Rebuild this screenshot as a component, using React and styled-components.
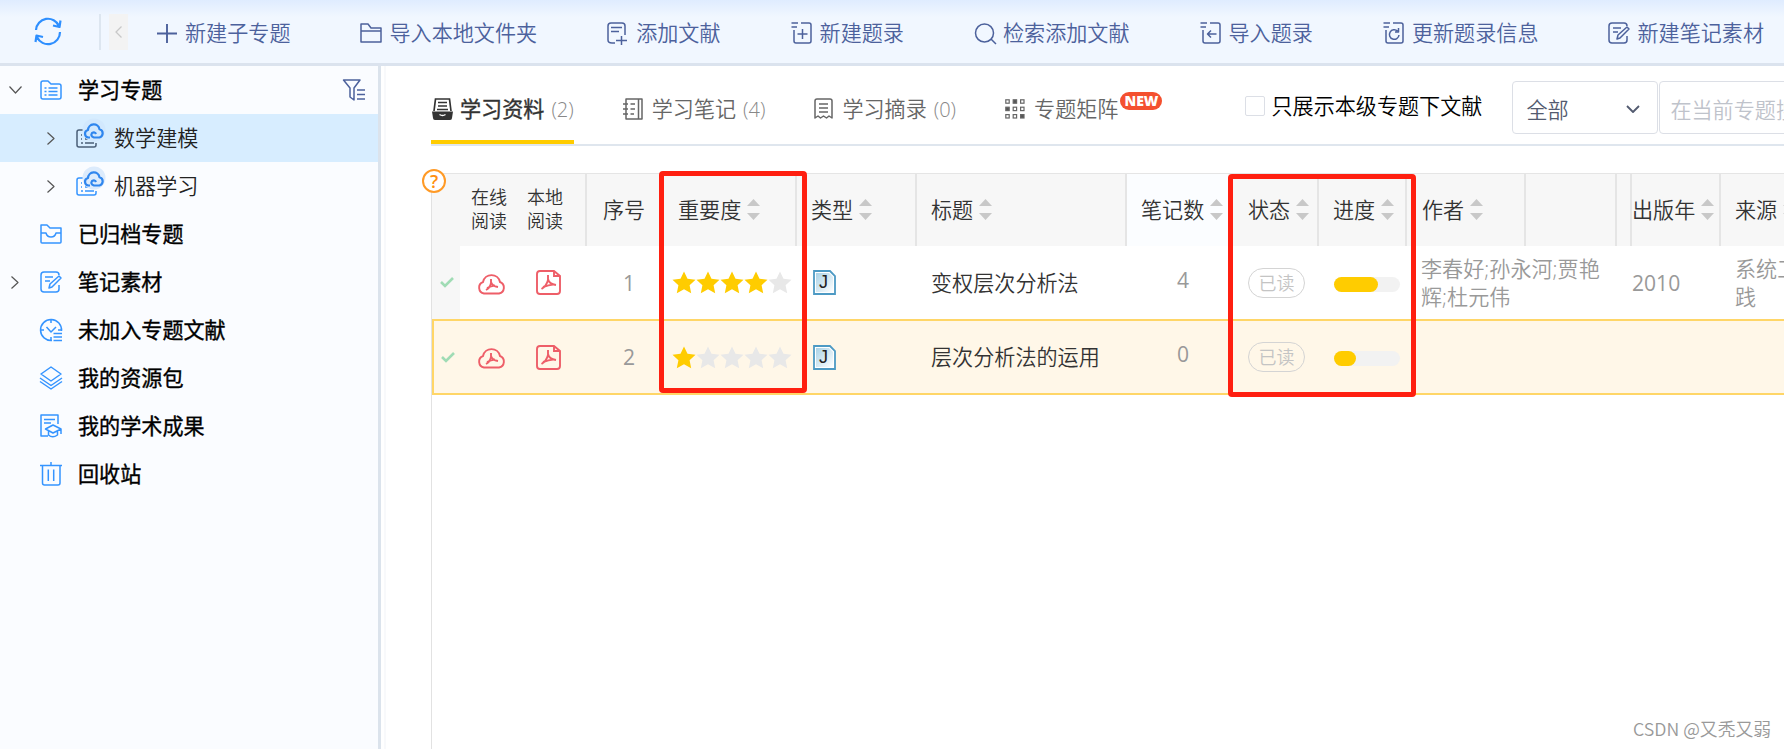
import React from "react";
import styled, { createGlobalStyle } from "styled-components";

const Global = createGlobalStyle`
  * {
    box-sizing: border-box;
  }
  body {
    margin: 0;
    background: #fff;
    font-family: "Open Sans", "Noto Sans CJK SC", sans-serif;
    font-size: 21.1px;
    font-weight: 350;
  }
  svg {
    display: block;
    flex: none;
    overflow: visible;
  }
`;

const Page = styled.div`
  position: relative;
  display: flex;
  flex-direction: column;
  width: 1784px;
  height: 749px;
  overflow: hidden;
`;

const Toolbar = styled.header`
  display: flex;
  align-items: center;
  flex: none;
  height: 66px;
  padding: 0 0 4px 34px;
  white-space: nowrap;
  color: #4c619c;
  border-bottom: 3px solid #dbe3ee;
  background: linear-gradient(#dfecff, #f1f7ff 17px);
`;

const Refresh = styled.div`
  width: 65px;
  padding-top: 3px;
  color: #2e8fff;
`;

const Collapse = styled.div`
  display: flex;
  align-items: center;
  width: 29px;
  height: 36px;
  margin-top: 5px;
  padding-left: 8px;
  border-left: 2px solid #dde6f0;
`;

const CollapseButton = styled.div`
  display: flex;
  align-items: center;
  justify-content: center;
  width: 19px;
  height: 36px;
  color: #c8c8c8;
  background: #f3f3f3;
`;

const Tools = styled.div`
  display: flex;
  gap: 70px;
  padding: 7px 0 0 29px;
`;

const Tool = styled.div`
  display: flex;
  align-items: center;
  line-height: 30px;
  gap: ${(props) => props.$gap || 7}px;
  color: #4c619c;
`;

const Main = styled.div`
  display: flex;
  flex: 1;
  min-height: 0;
`;

const Sidebar = styled.aside`
  width: 381px;
  flex: none;
  background: #fafcff;
  border-right: 3px solid #dbe3ec;
`;

const NavRow = styled.div`
  display: flex;
  align-items: center;
  height: 48px;
  padding: 0 13px 0 ${(props) => (props.$child ? 44 : 8)}px;
  color: ${(props) => (props.$child ? "#222" : "#000")};
  font-weight: ${(props) => (props.$child ? 350 : 400)};
  -webkit-text-stroke: ${(props) => (props.$child ? 0 : 0.35)}px;
  background: ${(props) => (props.$selected ? "#d7edff" : "transparent")};
`;

const Arrow = styled.div`
  display: flex;
  justify-content: center;
  width: 14px;
  margin-right: 18px;
  color: #555;
`;

const NavIcon = styled.div`
  width: 38px;
  color: ${(props) => (props.$dark ? "#4b5f78" : "#3594ff")};
`;

const NavLabel = styled.span`
  flex: 1;
  padding-bottom: 3px;
`;

const Content = styled.main`
  flex: 1;
  min-width: 0;
  margin-left: 3px;
  padding-left: 45px;
  border-left: 2px solid #f8f9fb;
`;

const TabBar = styled.div`
  display: flex;
  height: 80px;
  white-space: nowrap;
  border-bottom: 2px solid #dfe6ee;
`;

const Tab = styled.div`
  display: flex;
  align-items: center;
  height: 78px;
  margin-right: 48px;
  padding: 12px 0 ${(props) => (props.$active ? 0 : 4)}px 1px;
  color: ${(props) => (props.$active ? "#333" : "#666")};
  border-bottom: ${(props) => (props.$active ? "4px solid #fc0" : "0")};
`;

const TabLabel = styled.span`
  margin-left: ${(props) => (props.$active ? 7 : 9)}px;
  padding-bottom: 2px;
  font-weight: ${(props) => (props.$active ? 400 : 350)};
  -webkit-text-stroke: ${(props) => (props.$active ? 0.35 : 0)}px;
`;

const Count = styled.span`
  margin-left: 7px;
  color: #888;
  font-size: 20px;
`;

const NewBadge = styled.span`
  align-self: flex-start;
  width: 42px;
  height: 18px;
  margin: 14px 0 0 2px;
  border-radius: 9px;
  background: #f4502f;
  color: #fff;
  font: 800 14px/18px "Open Sans", sans-serif;
  text-align: center;
`;

const Filters = styled.div`
  display: flex;
  align-items: center;
  margin-left: 35px;
  color: #000;
`;

const Checkbox = styled.span`
  width: 20px;
  height: 20px;
  margin: 1px 6px 0 0;
  border: 1px solid #dcdfe6;
  border-radius: 2px;
`;

const Select = styled.div`
  display: flex;
  align-items: center;
  justify-content: space-between;
  width: 146px;
  height: 53px;
  margin: 5px 1px 0 30px;
  padding: 2px 17px 0 13px;
  color: #535b70;
  border: 1px solid #dcdfe6;
  border-radius: 4px;
`;

const Search = styled.div`
  display: flex;
  align-items: center;
  width: 300px;
  height: 53px;
  margin-top: 5px;
  padding: 2px 0 0 10px;
  color: #bfc3cb;
  border: 1px solid #dcdfe6;
  border-radius: 4px;
`;

const Table = styled.div`
  position: relative;
  width: 1400px;
  height: 580px;
  margin-top: 27px;
  border-top: 1px solid #e5e5e5;
  border-left: 1px solid #e2e2e2;
`;

const Row = styled.div`
  display: grid;
  grid-template-columns: 28px 127px 80px 130px 120px 210px 101px 91px 88px 119px 91px 15px 89px 111px;
  height: ${(props) => props.$height}px;
  color: #999;
  background: ${(props) => (props.$selected ? "#fff7e8" : "#fff")};
  box-shadow: ${(props) => (props.$selected ? "inset 0 0 0 2px #ffd667" : "none")};
`;

const Head = styled.div`
  display: flex;
  align-items: center;
  gap: 6px;
  height: 72px;
  padding: 0 0 3px ${(props) => props.$left || 0}px;
  white-space: nowrap;
  color: #333;
  border-right: ${(props) => (props.$line ? "2px solid #e5e5e5" : "0")};
  background: ${(props) => (props.$light ? "#fbfdff" : "#f7f7f7")};

  svg {
    margin-top: 2px;
  }
`;

const ReadLabel = styled.span`
  width: 37px;
  margin-right: 13px;
  font-size: 18px;
  line-height: 24px;
`;

const Cell = styled.div`
  display: flex;
  align-items: center;
  min-width: 0;
  padding-left: ${(props) => props.$left || 0}px;
  white-space: nowrap;
  line-height: 28px;
  color: ${(props) => props.$color || "inherit"};
  background: ${(props) => props.$bg || "transparent"};
`;

const ReadIcons = styled.div`
  display: flex;
  align-items: center;
  gap: 30px;
`;

const Digits = styled.span`
  padding-bottom: ${(props) => props.$raise || 0}px;
  font-weight: 400;
`;

const Status = styled.span`
  width: 57px;
  height: 30px;
  border: 1px solid #d4d4d4;
  border-radius: 15px;
  color: #c4c4c4;
  font-size: 18px;
  line-height: 29px;
  text-align: center;
`;

const Track = styled.div`
  width: 66px;
  height: 15px;
  margin-top: 3px;
  border-radius: 8px;
  background: #f2f2f2;
`;

const Fill = styled.div`
  height: 15px;
  border-radius: 8px;
  background: #fc0;
`;

const Help = styled.div`
  position: absolute;
  left: -10px;
  top: -5px;
  width: 24px;
  height: 24px;
  border: 2px solid #ff9a26;
  border-radius: 50%;
  background: #fff;
  color: #ff8f10;
  font: 600 18px/21px "Open Sans", sans-serif;
  text-align: center;
`;

const Highlight = styled.div`
  position: absolute;
  left: ${(props) => props.$x}px;
  top: ${(props) => props.$y}px;
  width: ${(props) => props.$w}px;
  height: ${(props) => props.$h}px;
  border: 5px solid #ff1f10;
  border-radius: 4px;
`;

const Watermark = styled.div`
  position: absolute;
  right: 13px;
  bottom: 9px;
  color: #999;
  font: 350 17.8px/24px "Noto Sans CJK SC", sans-serif;
`;

const Icon = ({ w = 22, h = 22, box = "0 0 22 22", stroke = 1.5, children }) => (
  <svg
    width={w}
    height={h}
    viewBox={box}
    fill="none"
    stroke="currentColor"
    strokeWidth={stroke}
    strokeLinejoin="round"
  >
    {children}
  </svg>
);

const listDoc = "M0.5 1H7M0.5 5H6M10 1H18q2 0 2 2V19q0 2-2 2H5q-2 0-2-2V8";

const toolIcons = {
  plus: <path d="M0 11.5H20M10 2V21" strokeWidth="1.9" />,
  folder: <path d="M1 20V2H8l3 4H21V20ZM1 9H21" />,
  addDoc: (
    <path d="M8 21H5Q1 21 1 18V4Q1 1 4 1H15q3 0 3 3V13M4 5.5H15M4 9.500H12M14.500 14V23M9 18.5H20" />
  ),
  addItem: <path d={listDoc + "M11.5 7V17M6.5 12H16.5"} />,
  search: (
    <>
      <circle cx="10.5" cy="11" r="9" />
      <path d="M17 17l5 5" />
    </>
  ),
  importItem: <path d={listDoc + "M16.500 12H7.500M11 8.500L7.500 12l3.500 3.500"} />,
  updateItem: <path d={listDoc + "M14.500 9A4.8 4.8 0 1 0 16 13M12 10H15.500V6"} />,
  note: (
    <path d="M19 4q0-3-3-3H4Q1 1 1 4V18q0 3 3 3H16q3 0 3-3V14M5 6H13M5 10H10M9 17l1-4L19 5l2 2-9 9Z" />
  ),
};

const tools = [
  ["plus", "新建子专题", 6],
  ["folder", "导入本地文件夹"],
  ["addDoc", "添加文献"],
  ["addItem", "新建题录"],
  ["search", "检索添加文献"],
  ["importItem", "导入题录"],
  ["updateItem", "更新题录信息"],
  ["note", "新建笔记素材"],
];

const TopicIcon = ({ halo }) => (
  <Icon w={22} h={20} box="0 0 22 20">
    <path d="M7 2H3Q1 2 1 4V17q0 2 2 2H18q2 0 2-2V15" />
    <path d="M5 7h1M5 11h1M5 15h2M9 15h9M9 11h3" />
    <circle cx="18" cy="2" r="11.5" fill={halo} stroke="none" />
    <path
      d="M14 9.500H12.500a3.800 3.800 0 0 1-.5-7.500 5.800 5.800 0 0 1 11.500-.8 4.300 4.300 0 0 1 0 8.300H18Q14 8 16 5Q19 3.500 20 6"
      stroke="#2f86ee"
      strokeWidth="2.2"
    />
  </Icon>
);

const navIcons = {
  topics: (
    <Icon>
      <path d="M1 18V4q0-2 2-2H8l3 3H19q2 0 2 2V18q0 2-2 2H3q-2 0-2-2ZM4.500 9h2M4.500 12.500h2M4.500 16h2M8.500 9h9M8.500 12.500h9M8.500 16h9" />
    </Icon>
  ),
  archived: (
    <Icon>
      <path d="M1 19V2H7l3 3H21V19q0 1-1 1H2q-1 0-1-1ZM1 10H6q1 4 5 4t5-4h5" />
    </Icon>
  ),
  note: <Icon>{toolIcons.note}</Icon>,
  clock: (
    <Icon>
      <path d="M12 21.500A10.500 10.500 0 1 1 21.500 12M11 0.500V4M11 18v3.500M0.500 11H4M18 11h3.500M6.500 8l4.500 5 5-5M13.500 14.500h8.500M13.500 18h8.500M13.500 21.500h8.500" />
    </Icon>
  ),
  layers: (
    <Icon h={24} box="0 0 22 24">
      <path d="M11 1L21 8 11 15 1 8ZM0 12l11 7.500L22 12M0 15.500L11 23l11-7.500" />
    </Icon>
  ),
  scholar: (
    <Icon h={24} box="0 0 22 24">
      <path d="M8 22H1V1H18V10M4 5.500H15M4 9H11M5.500 15L13 11l8 4-8 4ZM8.500 17v4q4 3.500 9 0V17M21 15v5" />
    </Icon>
  ),
  trash: (
    <Icon h={24} box="0 0 22 24">
      <path d="M0 3.500H22M11 0V3.500M2.500 3.500V21q0 2 2 2H18q2 0 2-2V3.500M8.300 7.500V19M13.700 7.500V19" />
    </Icon>
  ),
};

const nav = [
  { icon: "topics", label: "学习专题", arrow: "down", filter: true },
  { child: true, label: "数学建模", arrow: "right", selected: true },
  { child: true, label: "机器学习", arrow: "right" },
  { icon: "archived", label: "已归档专题" },
  { icon: "note", label: "笔记素材", arrow: "right" },
  { icon: "clock", label: "未加入专题文献" },
  { icon: "layers", label: "我的资源包" },
  { icon: "scholar", label: "我的学术成果" },
  { icon: "trash", label: "回收站" },
];

const Chevron = ({ dir }) =>
  dir === "down" ? (
    <Icon w={13} h={8} box="0 0 13 8" stroke={1.2}>
      <path d="M0.500 0.500l6 6.500 6-6.500" />
    </Icon>
  ) : (
    <Icon w={8} h={13} box="0 0 8 13" stroke={1.2}>
      <path d="M0.500 0.500l6.500 6-6.500 6" />
    </Icon>
  );

const Sorter = () => (
  <svg width="13" height="21" viewBox="0 0 13 21" fill="#c8c8c8">
    <path d="M6.500 0L13 7H0ZM6.500 21L13 14H0Z" />
  </svg>
);

const Star = ({ on }) => (
  <svg width="24" height="23" viewBox="0 0 24 23" fill={on ? "#fc0" : "#e8e8e8"}>
    <path d="M12 0.500l3.500 7.300 8 1-5.900 5.400 1.600 8.100-7.200-4-7.200 4 1.600-8.100L0.500 8.800l8-1Z" />
  </svg>
);

const CloudPdf = () => (
  <svg width="29" height="24" viewBox="0 0 29 24" fill="none" stroke="#ee5e68" strokeWidth="1.900">
    <path d="M7 22.500a6 6 0 0 1-1-11.500 8.700 8.700 0 0 1 17 0 6 6 0 0 1-1 11.500Z" />
    <path d="M14 8v3q1 4 7 5M10 17q4-2 8-2.500M9 19q4-2 5-7" strokeWidth="1.900" />
  </svg>
);

const LocalPdf = () => (
  <svg width="25" height="25" viewBox="0 0 25 25" fill="none" stroke="#ee5e68" strokeWidth="1.900">
    <path d="M18 1H4Q1 1 1 4V21q0 3 3 3H21q3 0 3-3V6ZM18 1V6H24" />
    <path d="M12 5v4q1 5 8 6M7 17q6-2 10-2.500M5.500 19q5-3 6.500-9" strokeWidth="1.900" />
  </svg>
);

const JournalIcon = () => (
  <svg width="23" height="25" viewBox="0 0 23 25" fill="none">
    <defs>
      <linearGradient id="page" x1="0" y1="0" x2="1" y2="1">
        <stop offset="0" stopColor="#a9d2e6" />
        <stop offset="1" stopColor="#fff" />
      </linearGradient>
    </defs>
    <path d="M1 1H17l5 5V24H1Z" fill="#fff" stroke="#4d9ac4" strokeWidth="1.800" />
    <path d="M3 3H16l4 4V22H3Z" fill="url(#page)" />
    <text
      x="6"
      y="18"
      fontSize="18"
      fontWeight="500"
      fontFamily="Liberation Sans, sans-serif"
      fill="#222"
    >
      J
    </text>
  </svg>
);

const Check = () => (
  <svg width="14" height="11" viewBox="0 0 14 11" fill="none" stroke="#a0dcb5" strokeWidth="2.600">
    <path d="M1 5l4 4 8-8" />
  </svg>
);

const MaterialIcon = () => (
  <svg width="21" height="22" viewBox="0 0 21 22" fill="none" stroke="#333" strokeWidth="1.700">
    <path d="M2 13L3.500 1h14L19 13M6 4.500h9M6 8h9M5 11.500h11" />
    <path d="M0 13.500H21l-1 6.500q0 2-2 2H3q-2 0-2-2Z" fill="#333" stroke="none" />
    <path d="M7.500 16.500q3 2 6 0" stroke="#fff" strokeWidth="1.500" />
  </svg>
);

const NotesIcon = () => (
  <Icon w={20} box="0 0 20 22">
    <path d="M3 1H19V21H3ZM15.500 1V21M0 6H5M0 11H5M0 16H5M7.500 6H12M7.500 11H12M7.500 16H11" />
  </Icon>
);

const ExcerptIcon = () => (
  <Icon w={19} box="0 0 19 22">
    <path d="M1 20V3q0-2 2-2H16q2 0 2 2V20l-3-2-2.500 2-3-2-3 2L4 18ZM5 6H14M5 10H14M5 14H14" />
  </Icon>
);

const solid = [1, 3, 8];
const MatrixIcon = () => (
  <svg width="20" height="20" viewBox="0 0 20 20" stroke="#666" strokeWidth="1.200">
    {[0, 1, 2, 3, 4, 5, 6, 7, 8].map((i) => (
      <rect
        key={i}
        x={0.8 + (i % 3) * 7.4}
        y={0.8 + Math.floor(i / 3) * 7.4}
        width="3.400"
        height="3.400"
        fill={solid.includes(i) ? "#555" : "none"}
      />
    ))}
  </svg>
);

const rows = [
  {
    no: 1,
    stars: 4,
    title: "变权层次分析法",
    notes: 4,
    progress: 66,
    authors: ["李春好;孙永河;贾艳", "辉;杜元伟"],
    year: "2010",
    source: ["系统工程理论与实", "践"],
  },
  {
    no: 2,
    stars: 1,
    title: "层次分析法的运用",
    notes: 0,
    progress: 34,
    authors: [],
    year: "",
    source: [],
    selected: true,
  },
];

const Lines = ({ items }) => (
  <div>
    {items.map((line) => (
      <div key={line}>{line}</div>
    ))}
  </div>
);

const HeaderRow = () => (
  <Row $height={72}>
    <Head />
    <Head $left={11} $line>
      <ReadLabel>
        在线
        <br />
        阅读
      </ReadLabel>
      <ReadLabel>
        本地
        <br />
        阅读
      </ReadLabel>
    </Head>
    <Head $left={16}>序号</Head>
    <Head $left={11} $line>
      重要度
      <Sorter />
    </Head>
    <Head $left={14} $line>
      类型
      <Sorter />
    </Head>
    <Head $left={14} $line>
      标题
      <Sorter />
    </Head>
    <Head $left={14} $light>
      笔记数
      <Sorter />
    </Head>
    <Head $left={20} $line>
      状态
      <Sorter />
    </Head>
    <Head $left={14} $line>
      进度
      <Sorter />
    </Head>
    <Head $left={15} $line>
      作者
      <Sorter />
    </Head>
    <Head $line />
    <Head $line />
    <Head $line>
      出版年
      <Sorter />
    </Head>
    <Head $left={14}>
      来源
      <Sorter />
    </Head>
  </Row>
);

const DataRow = ({ row }) => (
  <Row $height={row.selected ? 76 : 73} $selected={row.selected}>
    <Cell $left={row.selected ? 9 : 8} $bg={row.selected ? "" : "#f7f7f7"}>
      <Check />
    </Cell>
    <Cell $left={17}>
      <ReadIcons>
        <CloudPdf />
        <LocalPdf />
      </ReadIcons>
    </Cell>
    <Cell $left={36}>
      <Digits>{row.no}</Digits>
    </Cell>
    <Cell $left={5}>
      {[1, 2, 3, 4, 5].map((n) => (
        <Star key={n} on={n <= row.stars} />
      ))}
    </Cell>
    <Cell $left={16}>
      <JournalIcon />
    </Cell>
    <Cell $left={14} $color="#333">
      {row.title}
    </Cell>
    <Cell $left={50}>
      <Digits $raise={6}>{row.notes}</Digits>
    </Cell>
    <Cell $left={20}>
      <Status>已读</Status>
    </Cell>
    <Cell $left={15}>
      <Track>
        <Fill style={{ width: `${row.progress}%` }} />
      </Track>
    </Cell>
    <Cell $left={14}>
      <Lines items={row.authors} />
    </Cell>
    <Cell />
    <Cell />
    <Cell>
      <Digits>{row.year}</Digits>
    </Cell>
    <Cell $left={14}>
      <Lines items={row.source} />
    </Cell>
  </Row>
);

const App = () => {
  return (
    <Page>
      <Global />
      <Toolbar>
        <Refresh>
          <Icon w={28} h={26} box="0 0 28 26" stroke={2.2}>
            <path d="M2 12A12 12 0 0 1 25 8M26 14A12 12 0 0 1 3 19M26.500 2.500L25.500 9 19 7.500M1.500 24L2.500 17.500 9 19" />
          </Icon>
        </Refresh>
        <Collapse>
          <CollapseButton>
            <Icon w={7} h={12} box="0 0 7 12" stroke={1.3}>
              <path d="M6.500 0.500L1 6l5.500 5.500" />
            </Icon>
          </CollapseButton>
        </Collapse>
        <Tools>
          {tools.map(([icon, label, gap]) => (
            <Tool key={label} $gap={gap}>
              <Icon>{toolIcons[icon]}</Icon>
              {label}
            </Tool>
          ))}
        </Tools>
      </Toolbar>
      <Main>
        <Sidebar>
          {nav.map((item) => (
            <NavRow key={item.label} $child={item.child} $selected={item.selected}>
              <Arrow>{item.arrow && <Chevron dir={item.arrow} />}</Arrow>
              <NavIcon $dark={item.selected}>
                {item.child ? (
                  <TopicIcon halo={item.selected ? "#d2e8fd" : "#dcebfc"} />
                ) : (
                  navIcons[item.icon]
                )}
              </NavIcon>
              <NavLabel>{item.label}</NavLabel>
              {item.filter && (
                <Tool>
                  <Icon>
                    <path d="M0.500 1H17L11 9V21L7 18V9ZM14 11h8M14 15.500h8M14 20h8" />
                  </Icon>
                </Tool>
              )}
            </NavRow>
          ))}
        </Sidebar>
        <Content>
          <TabBar>
            <Tab $active>
              <MaterialIcon />
              <TabLabel $active>学习资料</TabLabel>
              <Count>(2)</Count>
            </Tab>
            <Tab>
              <NotesIcon />
              <TabLabel>学习笔记</TabLabel>
              <Count>(4)</Count>
            </Tab>
            <Tab>
              <ExcerptIcon />
              <TabLabel>学习摘录</TabLabel>
              <Count>(0)</Count>
            </Tab>
            <Tab>
              <MatrixIcon />
              <TabLabel>专题矩阵</TabLabel>
              <NewBadge>NEW</NewBadge>
            </Tab>
            <Filters>
              <Checkbox />
              只展示本级专题下文献
              <Select>
                全部
                <Icon w={14} h={8} box="0 0 14 8" stroke={1.8}>
                  <path d="M1 1l6 6 6-6" />
                </Icon>
              </Select>
              <Search>在当前专题搜索</Search>
            </Filters>
          </TabBar>
          <Table>
            <HeaderRow />
            {rows.map((row) => (
              <DataRow key={row.no} row={row} />
            ))}
            <Help>?</Help>
          </Table>
        </Content>
      </Main>
      <Highlight $x={659} $y={171} $w={148} $h={222} />
      <Highlight $x={1228} $y={174} $w={188} $h={223} />
      <Watermark>CSDN @又秃又弱</Watermark>
    </Page>
  );
};

export default App;
